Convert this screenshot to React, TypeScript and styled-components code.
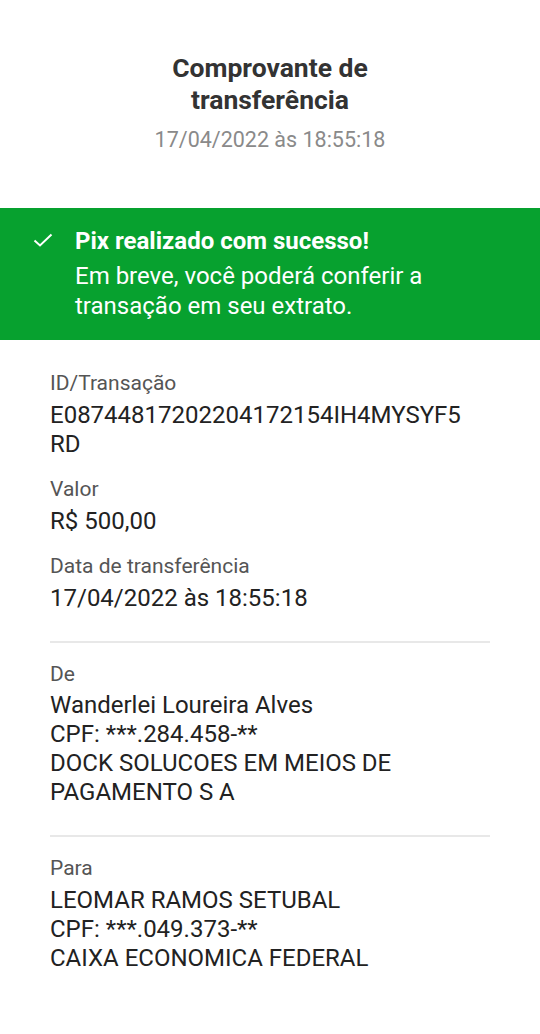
import React from "react";
import styled, { createGlobalStyle } from "styled-components";

const GlobalStyle = createGlobalStyle`
  body {
    margin: 0;
    background: #ffffff;
    font-family: Roboto, "Noto Sans", "Liberation Sans", sans-serif;
  }
`;

const Page = styled.div`
  width: 540px;
  min-height: 1034px;
  background: #ffffff;
`;

const Header = styled.header`
  display: flex;
  flex-direction: column;
  align-items: center;
  padding-top: 52px;
  margin-bottom: 55px;
`;

const Title = styled.h1`
  margin: 0;
  width: 280px;
  text-align: center;
  color: #333333;
  font-size: 26.5px;
  line-height: 32px;
  font-weight: 700;
`;

const Timestamp = styled.div`
  margin-top: 11px;
  color: #8a8a8a;
  font-size: 21.5px;
  line-height: 26px;
`;

const Banner = styled.div`
  display: flex;
  gap: 20px;
  background: #07a12f;
  color: #ffffff;
  padding: 19px 40px 19px 31px;
`;

const CheckIcon = styled.svg`
  flex: none;
  width: 24px;
  height: 24px;
  margin-top: 1px;
`;

const BannerText = styled.div`
  display: flex;
  flex-direction: column;
  gap: 6px;
`;

const BannerTitle = styled.div`
  font-size: 24px;
  line-height: 28px;
  font-weight: 700;
`;

const BannerBody = styled.div`
  font-size: 24px;
  line-height: 30px;
`;

const Details = styled.main`
  padding: 30px 50px 40px;
`;

const Section = styled.section<{ $divided?: boolean }>`
  display: flex;
  flex-direction: column;
  gap: 17.5px;
  padding-bottom: ${(p) => (p.$divided ? "28px" : "0")};
  margin-bottom: ${(p) => (p.$divided ? "18px" : "0")};
  border-bottom: ${(p) => (p.$divided ? "2px solid #e8e8e8" : "none")};
`;

const Field = styled.div`
  display: flex;
  flex-direction: column;
  gap: 4.5px;
`;

const Label = styled.div`
  color: #555555;
  font-size: 21px;
  line-height: 26px;
`;

const Value = styled.div`
  max-width: 422px;
  color: #222222;
  font-size: 24px;
  line-height: 29px;
  overflow-wrap: anywhere;
`;

const App: React.FC = () => {
  return (
    <Page>
      <GlobalStyle />
      <Header>
        <Title>Comprovante de transferência</Title>
        <Timestamp>17/04/2022 às 18:55:18</Timestamp>
      </Header>

      <Banner>
        <CheckIcon viewBox="0 0 24 24" fill="none">
          <polyline
            points="3.5,12.5 9,17.5 20.5,6.5"
            stroke="#ffffff"
            strokeWidth="2"
          />
        </CheckIcon>
        <BannerText>
          <BannerTitle>Pix realizado com sucesso!</BannerTitle>
          <BannerBody>
            Em breve, você poderá conferir a transação em seu extrato.
          </BannerBody>
        </BannerText>
      </Banner>

      <Details>
        <Section $divided>
          <Field>
            <Label>ID/Transação</Label>
            <Value>E08744817202204172154IH4MYSYF5RD</Value>
          </Field>
          <Field>
            <Label>Valor</Label>
            <Value>R$ 500,00</Value>
          </Field>
          <Field>
            <Label>Data de transferência</Label>
            <Value>17/04/2022 às 18:55:18</Value>
          </Field>
        </Section>

        <Section $divided>
          <Field>
            <Label>De</Label>
            <Value>
              Wanderlei Loureira Alves
              <br />
              CPF: ***.284.458-**
              <br />
              DOCK SOLUCOES EM MEIOS DE PAGAMENTO S A
            </Value>
          </Field>
        </Section>

        <Section>
          <Field>
            <Label>Para</Label>
            <Value>
              LEOMAR RAMOS SETUBAL
              <br />
              CPF: ***.049.373-**
              <br />
              CAIXA ECONOMICA FEDERAL
            </Value>
          </Field>
        </Section>
      </Details>
    </Page>
  );
};

export default App;
